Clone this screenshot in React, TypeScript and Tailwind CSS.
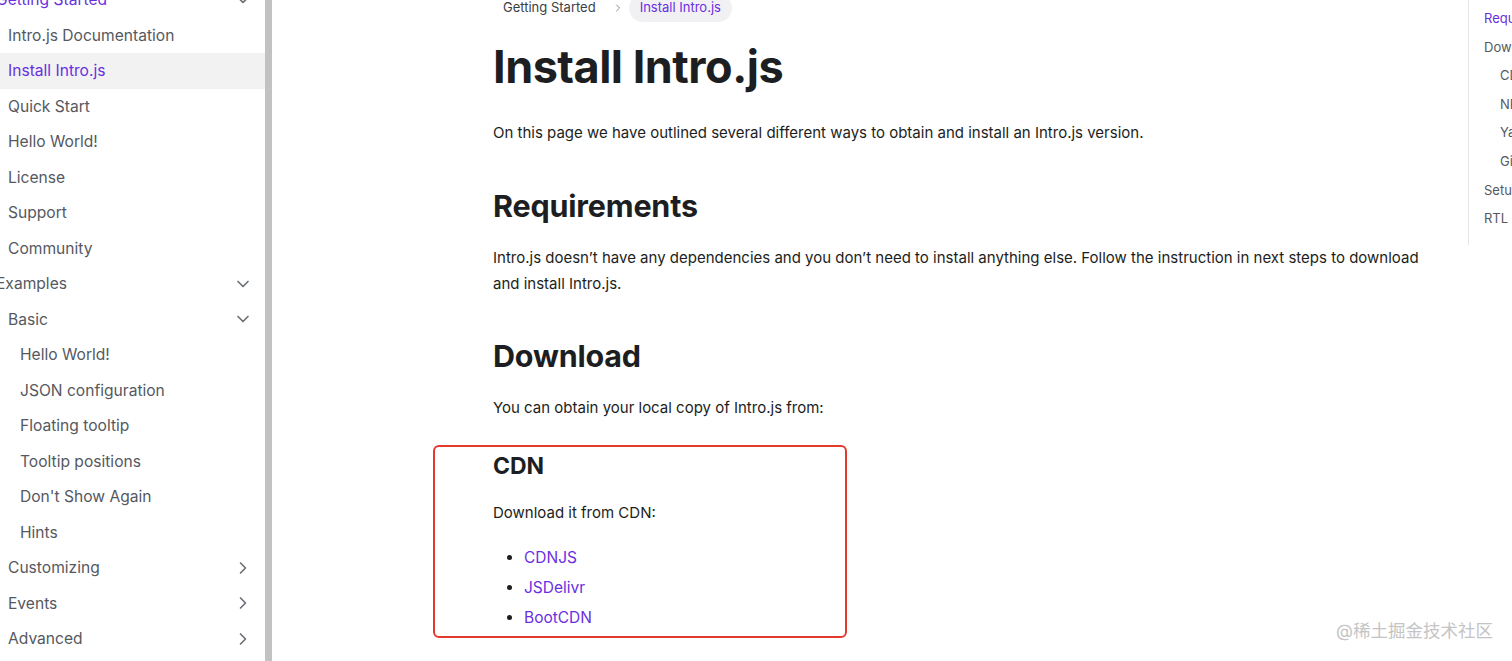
import { ChevronDown, ChevronRight } from "lucide-react";

type Item = {
  label: string;
  level: number;
  chevron?: "down" | "right";
  active?: boolean;
};

const sidebar: Item[] = [
  { label: "Getting Started", level: 0, chevron: "down", active: true },
  { label: "Intro.js Documentation", level: 1 },
  { label: "Install Intro.js", level: 1, active: true },
  { label: "Quick Start", level: 1 },
  { label: "Hello World!", level: 1 },
  { label: "License", level: 1 },
  { label: "Support", level: 1 },
  { label: "Community", level: 1 },
  { label: "Examples", level: 0, chevron: "down" },
  { label: "Basic", level: 1, chevron: "down" },
  { label: "Hello World!", level: 2 },
  { label: "JSON configuration", level: 2 },
  { label: "Floating tooltip", level: 2 },
  { label: "Tooltip positions", level: 2 },
  { label: "Don't Show Again", level: 2 },
  { label: "Hints", level: 2 },
  { label: "Customizing", level: 1, chevron: "right" },
  { label: "Events", level: 1, chevron: "right" },
  { label: "Advanced", level: 1, chevron: "right" },
];

const toc = [
  { label: "Requirements", sub: false, active: true },
  { label: "Download", sub: false },
  { label: "CDN", sub: true },
  { label: "NPM", sub: true },
  { label: "Yarn", sub: true },
  { label: "GitHub", sub: true },
  { label: "Setup", sub: false },
  { label: "RTL", sub: false },
];

function SidebarRow({ item }: { item: Item }) {
  const pad =
    item.level === 0 ? "pl-0 -ml-[4px]" : item.level === 1 ? "pl-2" : "pl-5";
  const isPage = item.active && item.level > 0;
  return (
    <div
      className={`flex items-center justify-between h-[35.5px] pr-[12px] ${
        isPage ? "bg-[#f2f2f3]" : ""
      }`}
    >
      <span
        className={`${pad} text-[15.6px] ${
          item.active ? "text-[#6a2fe0]" : "text-[#55595f]"
        }`}
      >
        {item.label}
      </span>
      {item.chevron === "down" && (
        <ChevronDown size={20} strokeWidth={2} className="text-[#6b6f75]" />
      )}
      {item.chevron === "right" && (
        <ChevronRight size={20} strokeWidth={2} className="text-[#6b6f75]" />
      )}
    </div>
  );
}

export default function App() {
  return (
    <div
      className="relative flex h-[661px] w-[1512px] overflow-hidden bg-white text-[#1c1e21]"
      style={{ fontFamily: "Inter, 'Noto Sans', sans-serif" }}
    >
      {/* Sidebar */}
      <aside className="w-[265px] shrink-0 overflow-hidden">
        <div className="-mt-[18px]">
          {sidebar.map((it, i) => (
            <SidebarRow key={i} item={it} />
          ))}
        </div>
      </aside>
      <div className="w-[7px] shrink-0 bg-[#c2c2c2]" />

      {/* Main */}
      <main className="flex flex-1 min-w-0">
        <article className="w-[1196px] shrink-0 pl-[221px] pr-[30px]">
          {/* Breadcrumbs */}
          <nav className="flex items-center h-[22px] -mt-[4px] pt-[2px] text-[13px]">
            <span className="pl-[10px] text-[#3b3e43]">Getting Started</span>
            <ChevronRight size={12} className="ml-[16px] mr-[5px] text-[#8a8d91]" />
            <span className="rounded-full bg-[#f1f1f3] px-[11px] py-[4px] -my-[4px] text-[#6a2fe0]">
              Install Intro.js
            </span>
          </nav>

          <h1 className="mt-[21px] text-[45px] font-bold leading-[56px] tracking-[-0.5px] text-[#1c1e21]">
            Install Intro.js
          </h1>
          <p className="mt-[25px] text-[15px] leading-[26px]">
            On this page we have outlined several different ways to obtain and
            install an Intro.js version.
          </p>

          <h2 className="mt-[40px] text-[30.5px] font-bold leading-[40px] tracking-[-0.2px]">
            Requirements
          </h2>
          <p className="mt-[19px] text-[15px] leading-[26px]">
            Intro.js doesn’t have any dependencies and you don’t need to
            install anything else. Follow the instruction in next steps to
            download and install Intro.js.
          </p>

          <h2 className="mt-[39px] text-[30.5px] font-bold leading-[40px] tracking-[-0.2px]">
            Download
          </h2>
          <p className="mt-[19px] text-[15px] leading-[26px]">
            You can obtain your local copy of Intro.js from:
          </p>

          {/* Highlighted CDN section */}
          <section className="mt-[24px] -ml-[60px] w-[414px] h-[193px] rounded-[6px] border-2 border-[#e23b2e] pl-[58px] pt-[3px]">
            <h3 className="text-[23px] font-bold leading-[32px]">CDN</h3>
            <p className="mt-[18px] text-[15px] leading-[26px]">
              Download it from CDN:
            </p>
            <ul className="mt-[17px] list-disc pl-[31px] text-[15.5px] leading-[30px] marker:text-[#1c1e21]">
              <li className="text-[#6a2fe0]">CDNJS</li>
              <li className="text-[#6a2fe0]">JSDelivr</li>
              <li className="text-[#6a2fe0]">BootCDN</li>
            </ul>
          </section>
        </article>

        {/* Table of contents */}
        <div className="shrink-0">
          <div className="h-[245px] border-l border-[#e6e6e6] pl-[15px] pt-[6px] text-[13px] whitespace-nowrap">
            {toc.map((t) => (
              <div
                key={t.label}
                className={`h-[28.6px] leading-[24px] ${t.sub ? "pl-[16px]" : ""} ${
                  t.active ? "text-[#6a2fe0]" : "text-[#55595f]"
                }`}
              >
                {t.label}
              </div>
            ))}
          </div>
        </div>
      </main>

      {/* Watermark */}
      <div
        className="absolute right-[19px] bottom-[17px] text-[17.5px] text-[#c4c4c4]"
        style={{ fontFamily: "Inter, 'Noto Sans CJK SC', sans-serif" }}
      >
        @稀土掘金技术社区
      </div>
    </div>
  );
}
